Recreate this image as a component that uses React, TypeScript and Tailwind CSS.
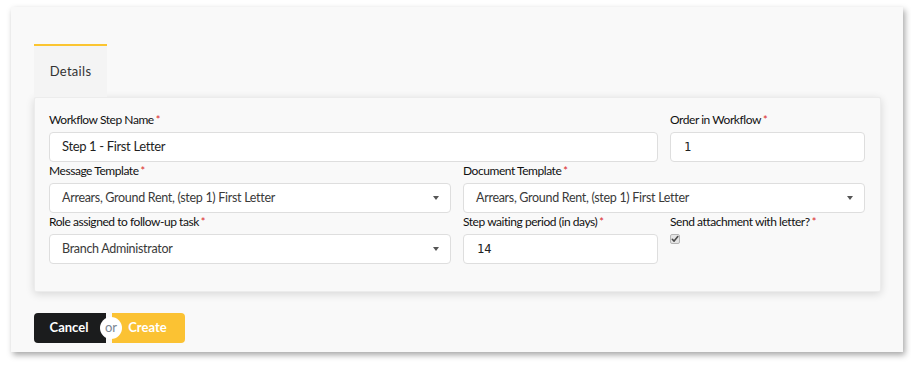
import React from 'react'

const font = { fontFamily: 'Lato, "Open Sans", sans-serif' }

function Label({ text }: { text: string }) {
  return (
    <div className="h-[16px] text-[12px] leading-[16px] text-[#111] tracking-[-0.45px] mb-[4px]">
      {text}
      <span className="text-[#db2828] ml-[2px] text-[11px] align-top">*</span>
    </div>
  )
}

function TextInput({ value, mono }: { value: string; mono?: boolean }) {
  return (
    <div className="h-[30px] rounded-[4px] border border-[#dedede] bg-white flex items-center px-[12px]">
      <span
        className={mono ? 'text-[12px] text-[#222] pl-[1px]' : 'text-[13px] text-[#1f1f1f] tracking-[-0.35px]'}
        style={mono ? { fontFamily: '"DejaVu Sans Mono", monospace' } : undefined}
      >
        {value}
      </span>
    </div>
  )
}

function Select({ value }: { value: string }) {
  return (
    <div className="h-[30px] rounded-[4px] border border-[#dedede] bg-white flex items-center justify-between pl-[12px] pr-[11px]">
      <span className="text-[12.5px] text-[#3a3a3a] tracking-[-0.3px]">{value}</span>
      <span className="w-0 h-0 border-l-[3.5px] border-r-[3.5px] border-t-[4px] border-l-transparent border-r-transparent border-t-[#555]" />
    </div>
  )
}

function Check() {
  return (
    <div className="w-[10px] h-[10px] rounded-[2px] border border-[#b5b5b5] bg-[#e4e4e4] flex items-center justify-center">
      <svg width="8" height="8" viewBox="0 0 8 8" fill="none">
        <path d="M1.3 4.3 L3.1 6.1 L6.8 1.6" stroke="#4a4a4a" strokeWidth="1.6" strokeLinecap="round" strokeLinejoin="round" />
      </svg>
    </div>
  )
}

export default function App() {
  return (
    <div className="w-[911px] h-[368px] bg-white pt-[7px] pl-[11px]" style={font}>
      <div className="w-[892px] h-[345px] bg-[#f9f9f9] shadow-[2px_3px_6px_rgba(0,0,0,0.35)] pt-[37px] pl-[23px] pr-[22px]">
        {/* Tabs */}
        <div className="flex">
          <div className="w-[73px] h-[53px] bg-[#f4f4f4] border-t-2 border-[#fbc531] flex items-center justify-center text-[13px] text-[#333] tracking-[0.3px]">
            Details
          </div>
        </div>

        {/* Form card */}
        <div className="bg-[#f9f9f9] border border-[#ececec] rounded-[2px] shadow-[0_2px_8px_rgba(0,0,0,0.14)] pt-[14px] pl-[14px] pr-[15px] pb-[27px]">
          <div className="grid grid-cols-4 gap-x-[12px] gap-y-[1px]">
            <div className="col-span-3">
              <Label text="Workflow Step Name" />
              <TextInput value="Step 1 - First Letter" />
            </div>
            <div>
              <Label text="Order in Workflow" />
              <TextInput value="1" mono />
            </div>

            <div className="col-span-2">
              <Label text="Message Template" />
              <Select value="Arrears, Ground Rent, (step 1) First Letter" />
            </div>
            <div className="col-span-2">
              <Label text="Document Template" />
              <Select value="Arrears, Ground Rent, (step 1) First Letter" />
            </div>

            <div className="col-span-2">
              <Label text="Role assigned to follow-up task" />
              <Select value="Branch Administrator" />
            </div>
            <div>
              <Label text="Step waiting period (in days)" />
              <TextInput value="14" mono />
            </div>
            <div>
              <Label text="Send attachment with letter?" />
              <Check />
            </div>
          </div>
        </div>

        {/* Actions */}
        <div className="mt-[21px] flex relative w-[151px]">
          <button className="w-[72px] h-[30px] rounded-l-[4px] bg-[#1b1c1d] text-white text-[13px] font-bold pr-[2px]">
            Cancel
          </button>
          <div className="w-[6px]" />
          <button className="w-[73px] h-[30px] rounded-r-[4px] bg-[#fbc233] text-white text-[13px] font-bold pr-[2px]">
            Create
          </button>
          <span className="absolute left-[66px] top-[4px] w-[22px] h-[22px] rounded-full bg-white flex items-center justify-center text-[13px] text-[#7a8593] leading-none pb-[2px]">
            or
          </span>
        </div>
      </div>
    </div>
  )
}
